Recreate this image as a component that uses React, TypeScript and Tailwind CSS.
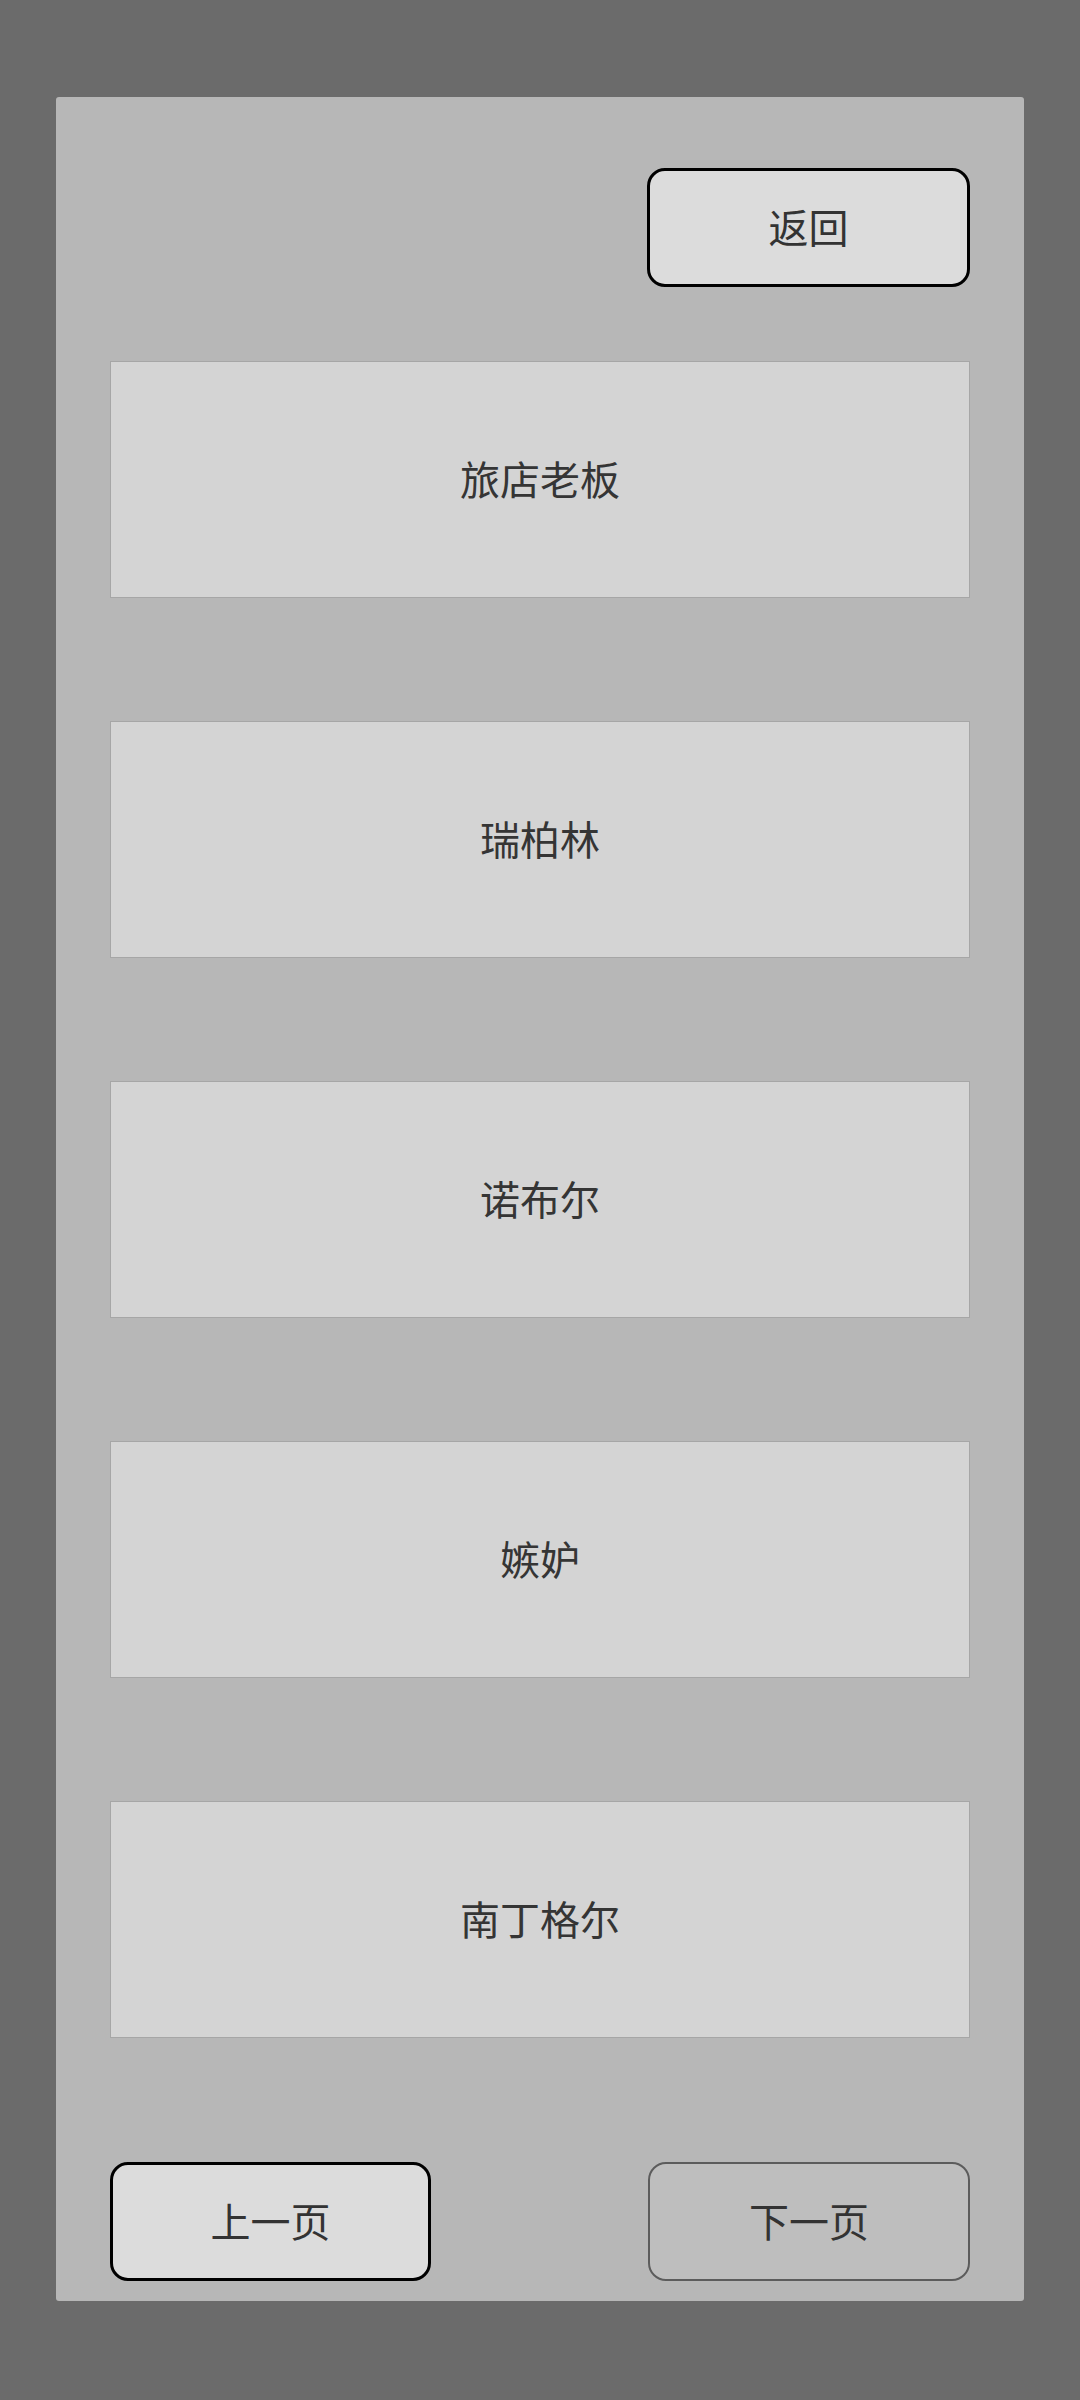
import React from "react";

const names = ["旅店老板", "瑞柏林", "诺布尔", "嫉妒", "南丁格尔"];
const font = { fontFamily: '"Noto Sans CJK SC", "Noto Sans", sans-serif' };

export default function App() {
  return (
    <div className="w-[1080px] h-[2400px] bg-[#6b6b6b] pt-[97px] px-[56px]" style={font}>
      <div className="h-[2204px] rounded-[3px] bg-[#b7b7b7] px-[54px] pt-[71px] pb-[22px] flex flex-col">
        <div className="flex justify-between h-[119px]">
          <div className="w-[324px] h-[119px] bg-[#b9b9b9]/20" />
          <button className="w-[323px] h-[119px] rounded-[18px] border-[3px] border-black bg-[#dcdcdc] text-[40px] text-[#333] flex items-center justify-center pb-[4px]">
            返回
          </button>
        </div>
        <div className="flex flex-col gap-[123px] mt-[74px]">
          {names.map((n) => (
            <div
              key={n}
              className="h-[237px] bg-[#d4d4d4] border border-[#a6a6a6] flex items-center justify-center text-[40px] text-[#353535] pb-[4px]"
            >
              {n}
            </div>
          ))}
        </div>
        <div className="flex justify-between mt-[124px]">
          <button className="w-[321px] h-[119px] rounded-[18px] border-[3px] border-black bg-[#dcdcdc] text-[40px] text-[#333] flex items-center justify-center pb-[4px]">
            上一页
          </button>
          <button className="w-[322px] h-[119px] rounded-[18px] border-[2px] border-[#5c5c5c] bg-[#bebebe] text-[40px] text-[#333] flex items-center justify-center pb-[4px]">
            下一页
          </button>
        </div>
      </div>
    </div>
  );
}
